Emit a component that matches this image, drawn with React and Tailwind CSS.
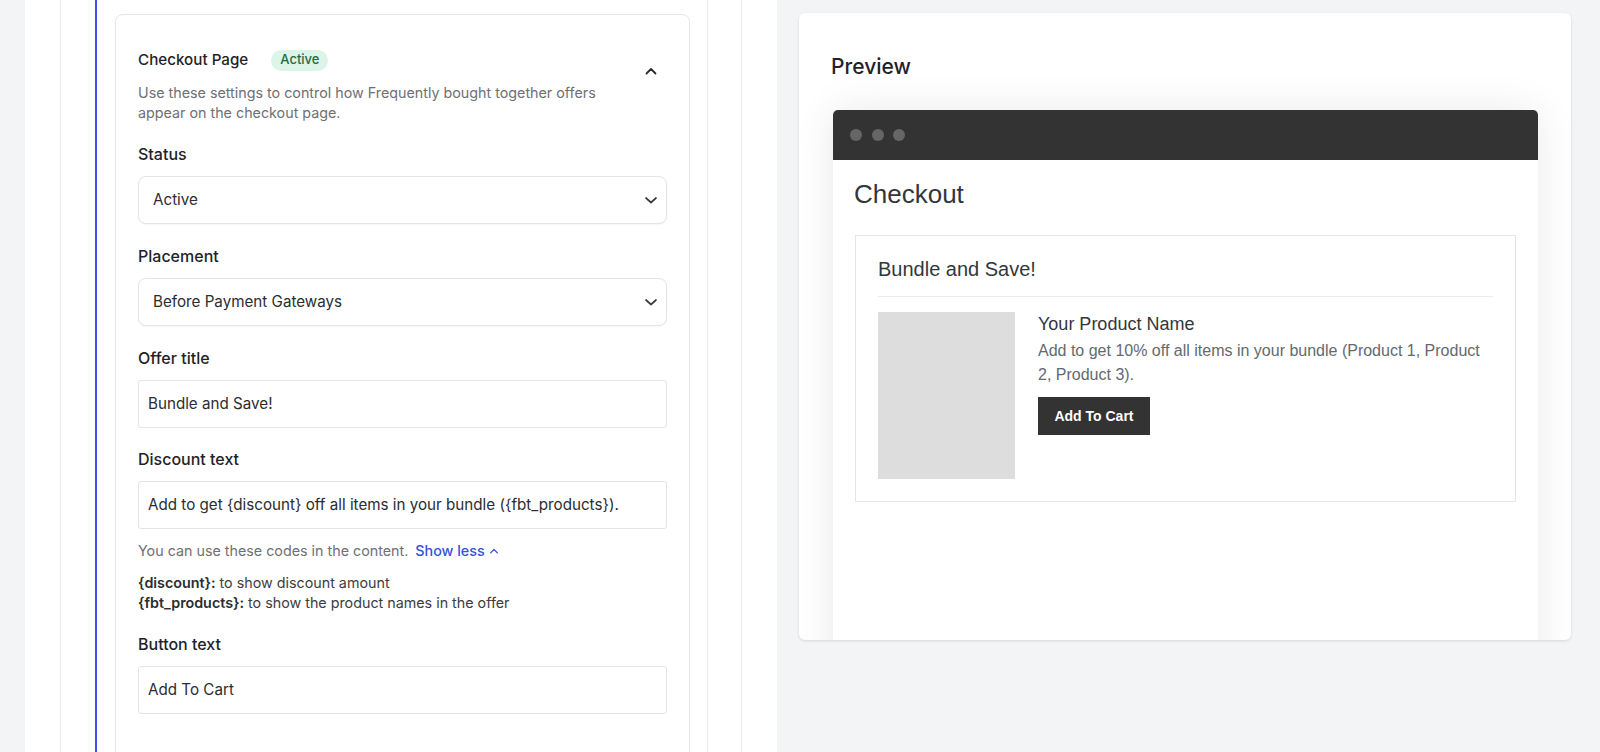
import React from 'react';

const ChevronDown = ({ className }) => (
  <svg viewBox="0 0 16 16" className={className} fill="none" stroke="currentColor" strokeWidth="1.7" strokeLinecap="round" strokeLinejoin="round">
    <path d="M3 6l5 4.5L13 6" />
  </svg>
);

const ChevronUp = ({ className }) => (
  <svg viewBox="0 0 16 16" className={className} fill="none" stroke="currentColor" strokeWidth="1.8" strokeLinecap="round" strokeLinejoin="round">
    <path d="M3.5 10.5L8 6l4.5 4.5" />
  </svg>
);

const Label = ({ children, className = '' }) => (
  <div className={`text-[16px] leading-5 font-medium text-[#1f2328] ${className}`}>{children}</div>
);

const SelectBox = ({ value }) => (
  <div className="mt-3 h-12 flex items-center justify-between pl-[14px] pr-[7px] border border-[#e3e4e6] rounded-lg shadow-[0_1px_2px_rgba(0,0,0,0.04)] bg-white">
    <span className="text-[15.2px] text-[#2b2d30]">{value}</span>
    <ChevronDown className="w-4 h-4 text-[#3a3d41]" />
  </div>
);

const TextBox = ({ value }) => (
  <div className="mt-3 h-12 flex items-center pl-[9px] border border-[#e3e4e6] rounded-[3px] bg-white">
    <span className="text-[15.2px] text-[#2b2d30]">{value}</span>
  </div>
);

const SettingsCard = () => (
  <div className="w-[575px] mt-[14px] self-start bg-white border border-[#e6e7e9] rounded-lg px-[22px] pt-[33px] pb-10 h-[760px]">
    {/* Header */}
    <div className="flex items-start justify-between">
      <div>
        <div className="flex items-center h-6">
          <span className="text-[15.2px] font-medium text-[#1f2328]">Checkout Page</span>
          <span className="ml-[23px] px-[9px] h-[21px] flex items-center rounded-full bg-[#ddf4e8] text-[13px] font-medium text-[#1d6b45]">Active</span>
        </div>
        <p className="mt-[11px] text-[14.3px] leading-5 text-[#6e7074] w-[480px]">
          Use these settings to control how Frequently bought together offers appear on the checkout page.
        </p>
      </div>
      <ChevronUp className="w-4 h-4 mt-[15px] mr-2 text-[#2b2d30]" />
    </div>

    <Label className="mt-[21px]">Status</Label>
    <SelectBox value="Active" />

    <Label className="mt-[22px]">Placement</Label>
    <SelectBox value="Before Payment Gateways" />

    <Label className="mt-[22px]">Offer title</Label>
    <TextBox value="Bundle and Save!" />

    <Label className="mt-[21px]">Discount text</Label>
    <TextBox value="Add to get {discount} off all items in your bundle ({fbt_products})." />

    <div className="mt-3 flex items-center text-[14.3px] leading-5">
      <span className="text-[#6e7074]">You can use these codes in the content.</span>
      <span className="ml-[7px] text-[#3551e0] font-medium">Show less</span>
      <ChevronUp className="w-3 h-3 ml-[3px] text-[#3551e0]" />
    </div>
    <div className="mt-3 text-[14.3px] leading-5 text-[#3a3d41]">
      <div><span className="font-semibold text-[#2b2d30]">{'{discount}:'}</span> to show discount amount</div>
      <div><span className="font-semibold text-[#2b2d30]">{'{fbt_products}:'}</span> to show the product names in the offer</div>
    </div>

    <Label className="mt-[21px]">Button text</Label>
    <TextBox value="Add To Cart" />
  </div>
);

const PreviewCard = () => (
  <div className="ml-[22px] mt-[13px] w-[772px] h-[627px] bg-white rounded-md shadow-[0_1px_3px_rgba(0,0,0,0.12)] overflow-hidden pl-[34px] pr-[33px] pt-[40px]">
    <h2 className="text-[21px] leading-7 font-medium text-[#1f2328] -ml-[2px]">Preview</h2>
    <div className="mt-[29px] rounded-t-[5px] shadow-[0_0_40px_rgba(0,0,0,0.09)] h-[600px] bg-white" style={{ fontFamily: '"Liberation Sans", Arial, sans-serif' }}>
      <div className="h-[50px] bg-[#333333] rounded-t-[5px] flex items-center pl-[17px] gap-[9.5px]">
        <span className="w-3 h-3 rounded-full bg-[#666666]" />
        <span className="w-3 h-3 rounded-full bg-[#666666]" />
        <span className="w-3 h-3 rounded-full bg-[#666666]" />
      </div>
      <div className="px-[22px] pt-[18px]">
        <h1 className="text-[26px] leading-[32px] text-[#32373c] -ml-[1px]">Checkout</h1>
        <div className="mt-[25px] border border-[#e5e5e5] px-[22px] pt-[19px] pb-[22px]">
          <h3 className="text-[20px] leading-7 text-[#32373c]">Bundle and Save!</h3>
          <div className="mt-[13px] border-t border-[#ebebeb]" />
          <div className="mt-[15px] flex">
            <div className="w-[137px] h-[167px] bg-[#dddddd] shrink-0" />
            <div className="ml-[23px]">
              <div className="text-[18px] leading-6 text-[#32373c]">Your Product Name</div>
              <p className="mt-[3px] text-[16px] leading-6 text-[#646970] w-[450px]">
                Add to get 10% off all items in your bundle (Product 1, Product 2, Product 3).
              </p>
              <div className="mt-[10px] w-[112px] h-[38px] bg-[#333333] flex items-center justify-center text-[14px] font-bold text-white">
                Add To Cart
              </div>
            </div>
          </div>
        </div>
      </div>
    </div>
  </div>
);

export default function App() {
  return (
    <div className="flex h-[752px] overflow-hidden bg-[#f3f4f6]" style={{ fontFamily: 'Inter, "Noto Sans", sans-serif' }}>
      {/* Settings column */}
      <div className="ml-[25px] w-[752px] h-full bg-white flex pl-[35px] shrink-0">
        <div className="w-[682px] h-full border-x border-[#ebebed] pl-[34px] flex">
          <div className="w-[613px] h-full border-l-2 border-[#3b4fe3] border-r border-r-[#ebebed] pl-[18px] flex">
            <SettingsCard />
          </div>
        </div>
      </div>

      {/* Preview column */}
      <PreviewCard />
    </div>
  );
}
